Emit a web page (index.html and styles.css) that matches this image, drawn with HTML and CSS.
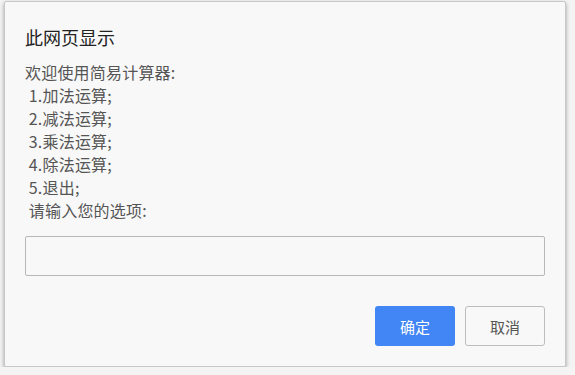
FILE: index.html
```html
<!DOCTYPE html>
<html lang="zh-CN">
<head>
    <meta charset="UTF-8">
    <meta name="viewport" content="width=device-width, initial-scale=1.0">
    <title>此网页显示</title>
    <link rel="stylesheet" href="styles.css">
</head>
<body>

    <div class="dialog">
        <h2 class="title">此网页显示</h2>
        <div class="message">欢迎使用简易计算器:
 1.加法运算;
 2.减法运算;
 3.乘法运算;
 4.除法运算;
 5.退出;
 请输入您的选项:</div>
        <input type="text" class="prompt-input">
        <div class="buttons">
            <button class="btn btn-ok">确定</button>
            <button class="btn btn-cancel">取消</button>
        </div>
    </div>

</body>
</html>
```

FILE: styles.css
```css
body {
    margin: 0;
    background-color: #f4f4f4;
    font-family: "Microsoft YaHei", "Noto Sans CJK SC", sans-serif;
}
.dialog {
    box-sizing: border-box;
    width: 562px;
    height: 366px;
    margin: 1px 0 0 4px;
    padding: 22px 20px 20px 20px;
    background: #f8f8f8;
    border: 1px solid #c8c8c8;
    border-radius: 2px;
    box-shadow: 0 2px 4px rgba(0, 0, 0, 0.35);
    display: flex;
    flex-direction: column;
}
.title {
    margin: 0;
    font-size: 18px;
    line-height: 26px;
    font-weight: normal;
    color: #222;
}
.message {
    margin-top: 11px;
    white-space: pre;
    font-size: 16px;
    line-height: 23px;
    color: #555;
}
.message {
    letter-spacing: 0.2px;
}
.prompt-input {
    box-sizing: border-box;
    margin-top: 14px;
    width: 520px;
    height: 40px;
    background: #f8f8f8;
    border: 1px solid #b8b8b8;
    border-radius: 2px;
    outline: none;
}
.buttons {
    margin-top: auto;
    display: flex;
    justify-content: flex-end;
    gap: 10px;
}
.btn {
    box-sizing: border-box;
    width: 80px;
    height: 40px;
    border-radius: 3px;
    font-family: inherit;
    font-size: 15px;
    cursor: pointer;
}
.btn-ok {
    background-color: #4285f4;
    border: none;
    color: white;
}
.btn-cancel {
    background-color: #f8f8f8;
    border: 1px solid #bdbdbd;
    color: #555;
}
```
